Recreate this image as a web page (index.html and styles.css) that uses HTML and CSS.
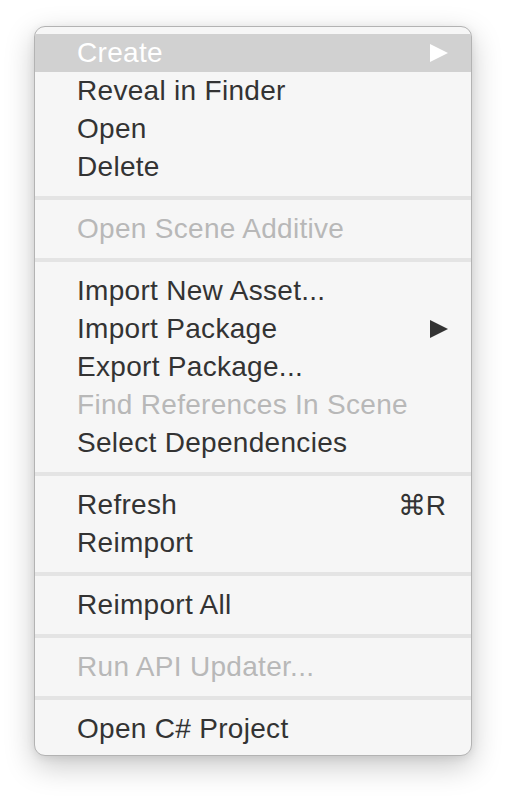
FILE: index.html
```html
<!DOCTYPE html>
<html>
<head>
<meta charset="utf-8">
<link rel="stylesheet" href="styles.css">
</head>
<body>
<div class="menu">
  <div class="item active"><span class="label">Create</span><span class="arrow"></span></div>
  <div class="item"><span class="label">Reveal in Finder</span></div>
  <div class="item"><span class="label">Open</span></div>
  <div class="item"><span class="label">Delete</span></div>
  <div class="sep"></div>
  <div class="item disabled"><span class="label">Open Scene Additive</span></div>
  <div class="sep"></div>
  <div class="item"><span class="label">Import New Asset...</span></div>
  <div class="item"><span class="label">Import Package</span><span class="arrow"></span></div>
  <div class="item"><span class="label">Export Package...</span></div>
  <div class="item disabled"><span class="label">Find References In Scene</span></div>
  <div class="item"><span class="label">Select Dependencies</span></div>
  <div class="sep"></div>
  <div class="item"><span class="label">Refresh</span><span class="shortcut">⌘R</span></div>
  <div class="item"><span class="label">Reimport</span></div>
  <div class="sep"></div>
  <div class="item"><span class="label">Reimport All</span></div>
  <div class="sep"></div>
  <div class="item disabled"><span class="label">Run API Updater...</span></div>
  <div class="sep"></div>
  <div class="item"><span class="label">Open C# Project</span></div>
</div>
</body>
</html>
```
FILE: styles.css
```css
html, body {
  margin: 0;
  padding: 0;
  background: #ffffff;
}
body {
  width: 506px;
  height: 798px;
  overflow: hidden;
  font-family: "Liberation Sans", Arial, sans-serif;
}
.menu {
  box-sizing: border-box;
  width: 438px;
  margin: 26px 0 0 34px;
  padding: 7px 0;
  background: #f6f6f6;
  border: 1px solid #b3b3b3;
  border-radius: 11px;
  box-shadow: 0 10px 30px rgba(0, 0, 0, 0.22), 0 2px 8px rgba(0, 0, 0, 0.08);
  display: flex;
  flex-direction: column;
}
.item {
  height: 38px;
  display: flex;
  align-items: center;
  justify-content: space-between;
  padding: 0 23px 0 42px;
  font-size: 28px;
  letter-spacing: 0.3px;
  color: #333333;
}
.item.active {
  background: #d1d1d1;
  color: #ffffff;
}
.item.disabled {
  color: #b8b8b8;
}
.arrow {
  width: 0;
  height: 0;
  border-top: 9.5px solid transparent;
  border-bottom: 9.5px solid transparent;
  border-left: 18px solid #333333;
}
.item.active .arrow {
  border-left-color: #ffffff;
}
.shortcut {
  font-size: 28px;
  letter-spacing: 0;
  margin-right: 2px;
}
.sep {
  height: 4px;
  margin: 10px 0;
  background: #e4e4e4;
}
```
